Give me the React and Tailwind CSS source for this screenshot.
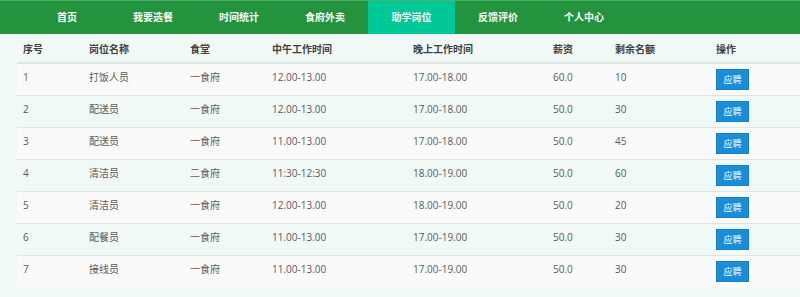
import React from 'react';

const navItems = ['首页', '我要选餐', '时间统计', '食府外卖', '助学岗位', '反馈评价', '个人中心'];

const jobs = [
  { id: 1, name: '打饭人员', hall: '一食府', noon: '12.00-13.00', night: '17.00-18.00', pay: '60.0', left: 10 },
  { id: 2, name: '配送员', hall: '一食府', noon: '12.00-13.00', night: '17.00-18.00', pay: '50.0', left: 30 },
  { id: 3, name: '配送员', hall: '一食府', noon: '11.00-13.00', night: '17.00-18.00', pay: '50.0', left: 45 },
  { id: 4, name: '清洁员', hall: '二食府', noon: '11:30-12:30', night: '18.00-19.00', pay: '50.0', left: 60 },
  { id: 5, name: '清洁员', hall: '一食府', noon: '12.00-13.00', night: '18.00-19.00', pay: '50.0', left: 20 },
  { id: 6, name: '配餐员', hall: '一食府', noon: '11.00-13.00', night: '17.00-19.00', pay: '50.0', left: 30 },
  { id: 7, name: '接线员', hall: '一食府', noon: '11.00-13.00', night: '17.00-19.00', pay: '50.0', left: 30 },
];

const headers = ['序号', '岗位名称', '食堂', '中午工作时间', '晚上工作时间', '薪资', '剩余名额', '操作'];
const widths = ['w-[66px]', 'w-[101px]', 'w-[82px]', 'w-[141px]', 'w-[140px]', 'w-[62px]', 'w-[101px]', ''];

const App = () => {
  return (
    <div className="w-[800px] h-[297px] bg-[#f0f9f5] overflow-hidden text-[10px] text-[#5a5a5a]" style={{ fontFamily: '"Open Sans", "Noto Sans CJK SC", sans-serif' }}>
      <div className="h-[34px] bg-[#23933e] border-t border-[#4caf6a] flex pl-[24px]">
        {navItems.map((item, i) => (
          <div
            key={item}
            className={`flex items-center justify-center text-white font-bold text-[10px] ${i === 4 ? 'bg-[#00c896] w-[87px]' : 'w-[86px]'}`}
          >
            {item}
          </div>
        ))}
      </div>

      <div className="pl-[17px]">
        <table className="w-[783px] border-collapse table-fixed">
          <thead>
            <tr className="h-[29px] border-b-2 border-[#dfe5e2]">
              {headers.map((h, i) => (
                <th key={h} className={`${widths[i]} text-left font-bold text-[#3f3f3f] pl-[6px] pt-[2px]`}>
                  {h}
                </th>
              ))}
            </tr>
          </thead>
          <tbody>
            {jobs.map((j, i) => (
              <tr key={j.id} className={`h-[32px] border-b border-[#dde6e2] last:border-b-0 ${i % 2 === 0 ? 'bg-[#fafafa]' : 'bg-[#f0f9f5]'}`}>
                <td className="pl-[6px] pb-[3px]">{j.id}</td>
                <td className="pl-[6px] pb-[3px]">{j.name}</td>
                <td className="pl-[6px] pb-[3px]">{j.hall}</td>
                <td className="pl-[6px] pb-[3px]">{j.noon}</td>
                <td className="pl-[6px] pb-[3px]">{j.night}</td>
                <td className="pl-[6px] pb-[3px]">{j.pay}</td>
                <td className="pl-[6px] pb-[3px]">{j.left}</td>
                <td className="pl-[6px]">
                  <button className="w-[33px] h-[21px] bg-[#1a8dd8] border border-[#1580c8] text-white text-[9px] leading-none">
                    应聘
                  </button>
                </td>
              </tr>
            ))}
          </tbody>
        </table>
      </div>
    </div>
  );
};

export default App;
